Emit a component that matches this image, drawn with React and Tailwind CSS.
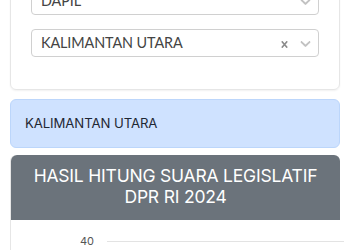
import { useState } from 'react';

const Chevron = () => (
  <svg width="17" height="17" viewBox="0 0 20 20" className="fill-[#c2c2c2]">
    <path d="M4.516 7.548c0.436-0.446 1.043-0.481 1.576 0l3.908 3.747 3.908-3.747c0.533-0.481 1.141-0.446 1.574 0 0.436 0.445 0.408 1.197 0 1.615-0.406 0.418-4.695 4.502-4.695 4.502-0.217 0.223-0.502 0.335-0.787 0.335s-0.57-0.112-0.789-0.335c0 0-4.287-4.084-4.695-4.502s-0.436-1.17 0-1.615z" />
  </svg>
);

const Clear = () => (
  <svg width="13" height="13" viewBox="0 0 20 20" className="fill-[#8c8c8c]">
    <path d="M14.348 14.849c-0.469 0.469-1.229 0.469-1.697 0l-2.651-3.030-2.651 3.029c-0.469 0.469-1.229 0.469-1.697 0-0.469-0.469-0.469-1.229 0-1.697l2.758-3.15-2.759-3.152c-0.469-0.469-0.469-1.228 0-1.697s1.228-0.469 1.697 0l2.652 3.031 2.651-3.031c0.469-0.469 1.228-0.469 1.697 0s0.469 1.229 0 1.697l-2.758 3.152 2.758 3.15c0.469 0.469 0.469 1.229 0 1.698z" />
  </svg>
);

const Pilihan = ({ label, clearable }) => (
  <div className="flex h-[28px] items-center rounded-[4px] border border-[#d0d0d0] bg-white pl-[9px] pr-[4px]">
    <span className="flex-1 text-[14.4px] text-[#444] font-['Lato',sans-serif] tracking-[-0.1px]">{label}</span>
    {clearable && (
      <span className="mr-[6px] mt-[3px] flex items-center">
        <Clear />
      </span>
    )}
    <Chevron />
  </div>
);

const App = () => {
  const [dapil] = useState('KALIMANTAN UTARA');

  return (
    <div className="h-[250px] overflow-hidden bg-white px-[10px] font-['Liberation_Sans',Arial,sans-serif]">
      <div className="mt-[-34px] rounded-[6px] border border-[#e6e6e6] px-[20px] pt-[20px] pb-[32px] shadow-[0_1px_2px_rgba(0,0,0,0.06)]">
        <Pilihan label="DAPIL" />
        <div className="mt-[14px]">
          <Pilihan label={dapil} clearable />
        </div>
      </div>

      <div className="mt-[9px] flex h-[49px] items-center rounded-[6px] border border-[#bcd6fb] bg-[#cfe2ff] px-[14px]">
        <span className="text-[13.2px] text-[#1f2733] font-['Inter',sans-serif] tracking-[-0.1px]">{dapil}</span>
      </div>

      <div className="mt-[7px] rounded-t-[6px] border-l border-[#e6e6e6]">
        <div className="flex h-[65px] flex-col items-center justify-center rounded-t-[6px] bg-[#6b737b] pb-[4px] text-center text-[17.5px] leading-[21px] text-white font-['Inter',sans-serif] tracking-[-0.2px]">
          <div>HASIL HITUNG SUARA LEGISLATIF</div>
          <div>DPR RI 2024</div>
        </div>
        <div className="mr-[-4px] flex items-center pt-[13px]">
          <span className="w-[83px] text-right text-[11px] text-[#555] font-['Inter',sans-serif]">40</span>
          <div className="ml-[13px] h-px flex-1 bg-[#e3e3e3]" />
        </div>
      </div>
    </div>
  );
};

export default App;
